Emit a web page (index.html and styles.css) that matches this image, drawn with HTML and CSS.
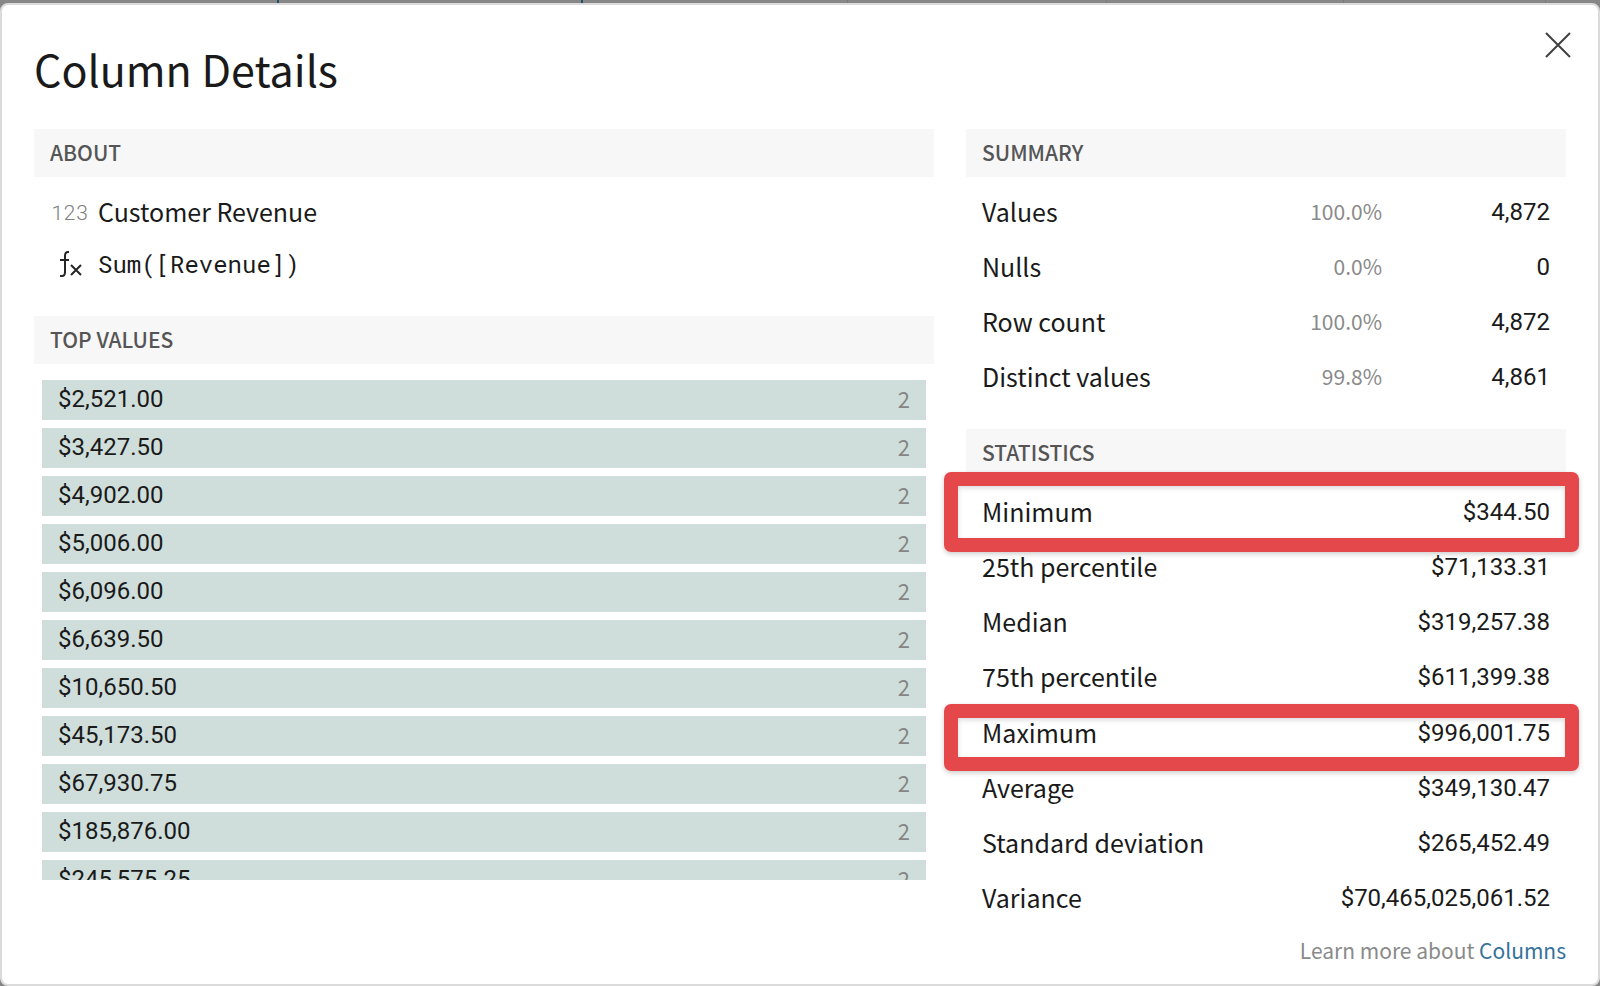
FILE: index.html
```html
<!DOCTYPE html>
<html lang="en">
<head>
<meta charset="utf-8">
<title>Column Details</title>
<link rel="stylesheet" href="styles.css">
</head>
<body>
<div class="backdrop">
  <div class="backdrop-grid" aria-hidden="true"><span class="line line-active"></span><span class="line line-active"></span><span class="line"></span><span class="line"></span><span class="line"></span><span class="line"></span><span class="line"></span></div>
  <main class="dialog" role="dialog" aria-labelledby="dialog-title">
    <button class="close" type="button" aria-label="Close">
      <svg viewBox="0 0 28 28" width="28" height="28"><path d="M2 2L26 26M26 2L2 26"/></svg>
    </button>
    <h1 class="title" id="dialog-title">Column Details</h1>
    <div class="columns">
      <div class="column">
        <section>
          <h2 class="section-title">About</h2>
          <div class="about">
            <div class="about-row"><span class="type-icon">123</span><span class="name">Customer Revenue</span></div>
            <div class="about-row"><span class="type-icon"><svg class="fx" viewBox="0 0 24 28" width="24" height="28"><path d="M11 2H10Q7 2 7 6V22Q7 26 4 26H2M2 10H11M13 15L23 25M23 15L13 25"/></svg></span><code class="formula">Sum([Revenue])</code></div>
          </div>
        </section>
        <section>
          <h2 class="section-title">Top values</h2>
          <ul class="values">
            <li class="value"><span>$2,521.00</span><span class="count">2</span></li>
            <li class="value"><span>$3,427.50</span><span class="count">2</span></li>
            <li class="value"><span>$4,902.00</span><span class="count">2</span></li>
            <li class="value"><span>$5,006.00</span><span class="count">2</span></li>
            <li class="value"><span>$6,096.00</span><span class="count">2</span></li>
            <li class="value"><span>$6,639.50</span><span class="count">2</span></li>
            <li class="value"><span>$10,650.50</span><span class="count">2</span></li>
            <li class="value"><span>$45,173.50</span><span class="count">2</span></li>
            <li class="value"><span>$67,930.75</span><span class="count">2</span></li>
            <li class="value"><span>$185,876.00</span><span class="count">2</span></li>
            <li class="value"><span>$245,575.25</span><span class="count">2</span></li>
          </ul>
        </section>
      </div>
      <div class="column">
        <section>
          <h2 class="section-title">Summary</h2>
          <table class="stats">
            <tr><th scope="row">Values</th><td class="percent">100.0%</td><td class="number">4,872</td></tr>
            <tr><th scope="row">Nulls</th><td class="percent">0.0%</td><td class="number">0</td></tr>
            <tr><th scope="row">Row count</th><td class="percent">100.0%</td><td class="number">4,872</td></tr>
            <tr><th scope="row">Distinct values</th><td class="percent">99.8%</td><td class="number">4,861</td></tr>
          </table>
        </section>
        <section>
          <h2 class="section-title">Statistics</h2>
          <table class="stats stats-long">
            <tr class="marked marked-min"><th scope="row">Minimum</th><td class="number">$344.50</td></tr>
            <tr><th scope="row">25th percentile</th><td class="number">$71,133.31</td></tr>
            <tr><th scope="row">Median</th><td class="number">$319,257.38</td></tr>
            <tr><th scope="row">75th percentile</th><td class="number">$611,399.38</td></tr>
            <tr class="marked marked-max"><th scope="row">Maximum</th><td class="number">$996,001.75</td></tr>
            <tr><th scope="row">Average</th><td class="number">$349,130.47</td></tr>
            <tr><th scope="row">Standard deviation</th><td class="number">$265,452.49</td></tr>
            <tr><th scope="row">Variance</th><td class="number">$70,465,025,061.52</td></tr>
          </table>
        </section>
        <p class="more">Learn more about <a href="#columns">Columns</a></p>
      </div>
    </div>
  </main>
</div>
</body>
</html>
```
FILE: styles.css
```css
* { box-sizing: border-box; }

body {
  margin: 0;
  background: #868786;
  color: #1a1a1a;
  font-family: "Noto Sans CJK SC", "Noto Sans", sans-serif;
  font-size: 25px;
  line-height: 36px;
}

.backdrop {
  display: flex;
  flex-direction: column;
  min-height: 100vh;
}

.backdrop-grid {
  display: grid;
  grid-template-columns: 279px 304px 265px 259px 237px 202px 1fr;
  height: 3px;
}

.line { border-right: 1px solid #7b7b7b; }
.line-active { border-right: 2px solid #264f6c; }
.line:last-child { border: 0; }

.dialog {
  position: relative;
  flex: 1;
  padding: 35px 32px 14px;
  border: 2px solid #dbdbdb;
  border-radius: 8px;
  background: #fff;
}

.close {
  position: absolute;
  top: 26px;
  right: 26px;
  display: flex;
  padding: 0;
  border: 0;
  background: none;
  cursor: pointer;
}

.close path { stroke: #404040; stroke-width: 2; fill: none; }

.title {
  margin: 0 0 33px;
  font-size: 43px;
  font-weight: 400;
  line-height: 56px;
}

.columns {
  display: grid;
  grid-template-columns: 3fr 2fr;
  column-gap: 32px;
}

.section-title {
  margin: 0;
  padding: 0 16px 2px;
  background: #f7f7f7;
  color: #555;
  font-size: 21px;
  font-weight: 500;
  line-height: 46px;
  text-transform: uppercase;
}

.about { padding: 9px 16px 26px; }

.about-row {
  display: flex;
  align-items: center;
  height: 52px;
}

.name { padding-bottom: 2px; }

.type-icon {
  display: flex;
  justify-content: center;
  width: 40px;
  margin-right: 8px;
  color: #808080;
  font-family: "Roboto Mono", Roboto, sans-serif;
  font-size: 21px;
  font-weight: 300;
}

.fx path { stroke: #262626; stroke-width: 2; fill: none; }

.formula {
  font-family: "Roboto Mono", "Liberation Mono", monospace;
  font-size: 24px;
}

.values {
  display: flex;
  flex-direction: column;
  gap: 8px;
  height: 516px;
  margin: 0;
  padding: 16px 8px 0;
  overflow: hidden;
  list-style: none;
}

.value {
  display: flex;
  flex: none;
  justify-content: space-between;
  height: 40px;
  padding: 0 16px;
  background: #cfdedb;
  font-family: Roboto, sans-serif;
  font-size: 24px;
  line-height: 38px;
}

.count {
  color: #858585;
  font-family: "Noto Sans CJK SC", sans-serif;
  font-size: 22px;
  line-height: 36px;
}

.stats {
  width: 100%;
  margin: 8px 0 24px;
  border-collapse: collapse;
}

.stats tr { height: 55px; }

.stats-long { height: 442px; }

.stats th,
.stats td { padding: 0 16px 4px; text-align: right; }

.stats th { font-weight: 400; text-align: left; }

.stats .percent {
  padding: 0 0 4px;
  color: #8a8a8a;
  font-size: 21px;
}

.stats .number {
  padding-bottom: 2px;
  font-family: Roboto, sans-serif;
  font-size: 24px;
}

.stats .percent + .number { width: 184px; }

/* Callout frames drawn over the highlighted rows */
.marked { position: relative; }

.marked::after {
  content: "";
  position: absolute;
  right: -13px;
  left: -22px;
  border: 14px solid #e5484b;
  border-radius: 7px;
  box-shadow: 0 2px 5px rgba(0, 0, 0, .2), inset 0 2px 5px rgba(0, 0, 0, .15);
}

.marked-min::after { top: -13px; bottom: -12px; }
.marked-max::after { top: -2px; bottom: -10px; }

.more {
  margin: -19px 0 0;
  color: #8a8a8a;
  font-size: 21px;
  text-align: right;
}

.more a { color: #35729a; text-decoration: none; }
```
